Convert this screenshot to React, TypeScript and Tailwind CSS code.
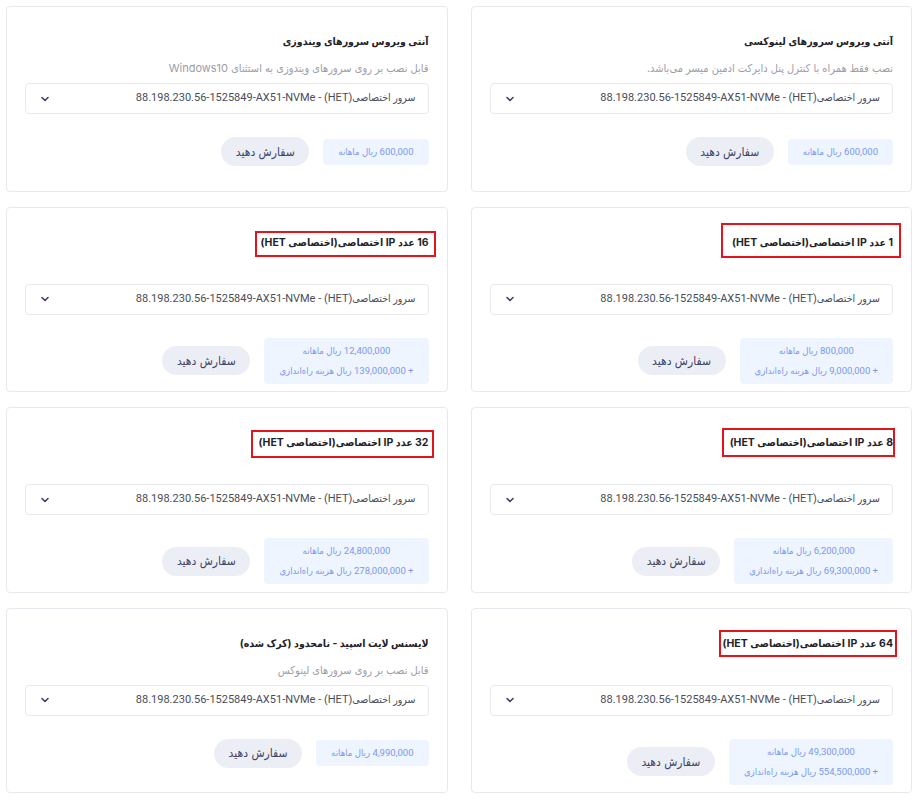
import React from "react";

type Box = { t: number; r: number; b: number; l: number };
type Item = {
  title: string;
  desc?: string;
  monthly: string;
  setup?: string;
  box?: Box;
};

const items: Item[] = [
  { title: "آنتی ویروس سرورهای لینوکسی", desc: "نصب فقط همراه با کنترل پنل دایرکت ادمین میسر می‌باشد.", monthly: "600,000" },
  { title: "آنتی ویروس سرورهای ویندوزی", desc: "قابل نصب بر روی سرورهای ویندوزی به استثنای Windows10", monthly: "600,000" },
  { title: "1 عدد IP اختصاصی(اختصاصی HET)", monthly: "800,000", setup: "9,000,000", box: { t: 11, r: 8, b: 6, l: 11 } },
  { title: "16 عدد IP اختصاصی(اختصاصی HET)", monthly: "12,400,000", setup: "139,000,000", box: { t: 3, r: 7, b: 5, l: 6 } },
  { title: "8 عدد IP اختصاصی(اختصاصی HET)", monthly: "6,200,000", setup: "69,300,000", box: { t: 6, r: 2, b: 5, l: 8 } },
  { title: "32 عدد IP اختصاصی(اختصاصی HET)", monthly: "24,800,000", setup: "278,000,000", box: { t: 4, r: 5, b: 6, l: 8 } },
  { title: "64 عدد IP اختصاصی(اختصاصی HET)", monthly: "49,300,000", setup: "554,500,000", box: { t: 5, r: 4, b: 4, l: 4 } },
  { title: "لایسنس لایت اسپید - نامحدود (کرک شده)", desc: "قابل نصب بر روی سرورهای لینوکس", monthly: "4,990,000" },
];

const AR = '"DejaVu Sans Condensed", "DejaVu Sans", sans-serif';

function Chevron() {
  return (
    <svg width="10" height="10" viewBox="0 0 10 10" fill="none" className="shrink-0">
      <path d="M2 3.5 L5 6.5 L8 3.5" stroke="#3d4466" strokeWidth="1.6" strokeLinecap="round" strokeLinejoin="round" />
    </svg>
  );
}

function Card({ item }: { item: Item }) {
  return (
    <div className="h-[185.5px] rounded-[4px] border border-[#e8e9ee] bg-white px-[18px] pt-[26px]">
      <div className="flex h-[18px] items-center text-[10.5px] leading-[18px]">
        <span className="relative block font-bold text-[#1f2328]">
          {item.title}
          {item.box && (
            <span
              className="pointer-events-none absolute border-2 border-[#e3141c]"
              style={{ top: -item.box.t, right: -item.box.r, bottom: -item.box.b, left: -item.box.l }}
            />
          )}
        </span>
      </div>
      <div className="mt-[8px] h-[18px] truncate text-[11px] leading-[18px] text-[#9d9da5]">{item.desc ?? ""}</div>
      <div className="mt-[6px] flex h-[31px] items-center justify-between rounded-[4px] border border-[#e8e9ee] pl-[14px] pr-[12px]">
        <span className="text-[11px] text-[#4a4d57]" style={{ fontFamily: `Roboto, ${AR}` }}>
          <span className="text-[10.5px]">سرور اختصاصی</span><bdi>(HET)</bdi> - <bdi>88.198.230.56-1525849-AX51-NVMe</bdi>
        </span>
        <Chevron />
      </div>
      <div className="mt-[23px] flex items-center gap-[14px]">
        <div
          className="flex flex-col items-center rounded-[4px] bg-[#eef5ff] px-[15px] py-[3px] text-[9.5px] leading-[20px] text-[#7a98ee]"
          style={{ fontFamily: `Roboto, ${AR}` }}
        >
          <div>{item.monthly} ریال ماهانه</div>
          {item.setup && <div>+ {item.setup} ریال هزینه راه‌اندازی</div>}
        </div>
        <button className="flex h-[29px] w-[88px] items-center justify-center rounded-full bg-[#eceef6] text-[12px] text-[#3d4466]">
          سفارش دهید
        </button>
      </div>
    </div>
  );
}

export default function App() {
  return (
    <div
      dir="rtl"
      className="min-h-[801px] w-[919px] bg-white"
      style={{ fontFamily: `Inter, ${AR}` }}
    >
      <div className="grid grid-cols-2 gap-x-[23px] gap-y-[15px] pl-[6px] pr-[7px] pt-[6px]">
        {items.map((it, i) => (
          <Card key={i} item={it} />
        ))}
      </div>
    </div>
  );
}
